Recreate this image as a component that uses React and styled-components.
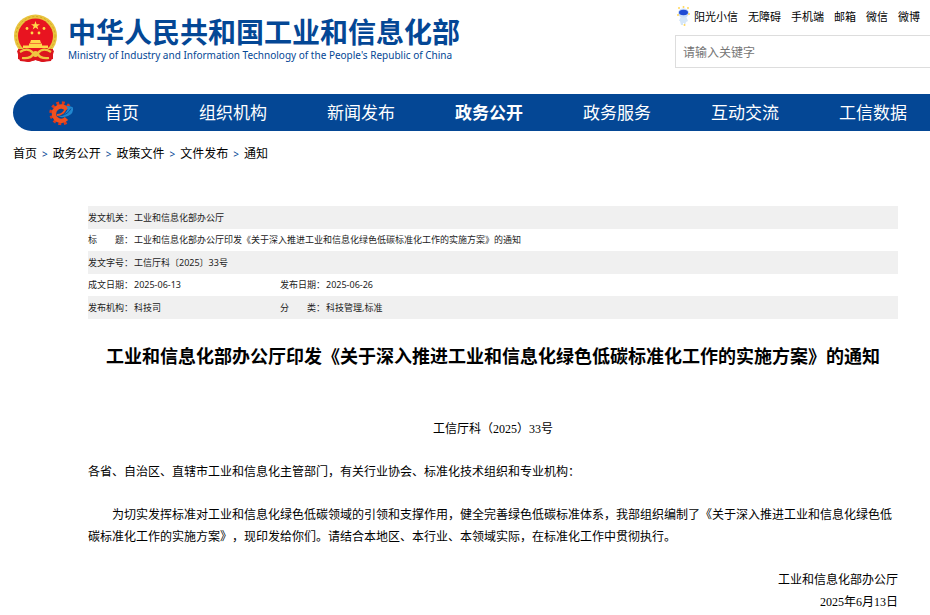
import React from 'react';
import styled, { createGlobalStyle } from 'styled-components';

const GlobalStyle = createGlobalStyle`
    * {
        box-sizing:border-box;
    }
    body {
        margin:0;
        background-color:#fff;
        color:#000;
        font-family:"Noto Sans", "Noto Sans CJK SC", sans-serif;
        font-size:12px;
        text-spacing-trim:space-all;
        overflow-x:hidden;
    }
    a {
        color:inherit;
        text-decoration:none;
    }
`;

const Page = styled.div`
    padding-left:13px;
`;

const Header = styled.header`
    display:flex;
    justify-content:space-between;
    align-items:flex-start;
    height:94px;
`;

const Brand = styled.a`
    display:flex;
    gap:10px;
    padding-top:14px;
    color:#044795;
`;

const BrandText = styled.span`
    display:flex;
    flex-direction:column;
    white-space:nowrap;
`;

const BrandName = styled.strong`
    font-family:"Noto Sans CJK SC", sans-serif;
    font-size:28px;
    line-height:34px;
`;

const BrandSub = styled.span`
    font-size:10px;
    line-height:14px;
`;

const Tools = styled.div`
    display:flex;
    flex-direction:column;
    width:255px;
    padding-top:7px;
`;

const Links = styled.nav`
    display:flex;
    align-items:center;
    gap:10px;
    height:18px;
    padding-left:2px;
    font-size:11px;
    white-space:nowrap;
`;

const ToolLink = styled.a`
    display:flex;
    align-items:center;
    gap:4px;
`;

const Search = styled.input`
    height:33px;
    margin-top:10px;
    padding:2px 7px 0;
    border:1px solid #ddd;
    border-right:none;
    border-radius:0;
    font-family:inherit;
    font-size:12px;
    outline:none;

    &::placeholder {
        color:#757575;
    }
`;

const MainNav = styled.nav`
    display:flex;
    align-items:center;
    height:37px;
    padding-left:36px;
    background-color:#044795;
    border-radius:19px 0 0 19px;
    overflow:hidden;
`;

const NavList = styled.div`
    display:flex;
    gap:60px;
    margin-left:30px;
`;

const NavLink = styled.a`
    color:#fff;
    font-size:17px;
    line-height:37px;
    font-weight:${props => (props.$active ? '700' : '400')};
    white-space:nowrap;
`;

const Crumbs = styled.nav`
    display:flex;
    gap:5px;
    margin-top:14px;
    line-height:18px;
`;

const Arrow = styled.span`
    color:#044795;
    font-size:10px;
`;

const Article = styled.main`
    margin:43px 32px 0 75px;
`;

const Meta = styled.table`
    width:100%;
    border-collapse:collapse;
    table-layout:fixed;
    color:#222;
    font-size:9px;
    line-height:12px;
`;

const MetaRow = styled.tr`
    height:22px;

    &:nth-child(odd) {
        height:23px;
        background-color:#f0f0f0;
    }
`;

const MetaLabel = styled.th`
    padding:0;
    font-weight:400;
    text-align:left;
    white-space:pre;
`;

const MetaValue = styled.td`
    padding:0;
`;

const Title = styled.h1`
    margin:23px 0 48px;
    font-size:18px;
    line-height:28px;
    text-align:center;
`;

const Text = styled.p`
    margin:0 0 21px;
    font-family:"Liberation Serif", "Noto Sans CJK SC", sans-serif;
    line-height:22px;
    text-align:${props => props.$align || 'left'};
    text-indent:${props => (props.$indent ? '2em' : '0')};
`;

const Emblem = () => (
    <svg width="45" height="49" viewBox="0 0 45 49" aria-hidden="true">
        <path d="M7 34l31 0 3 3-3 10-9 1-6.500-2-6.500 2-9-1L4 37z" fill="#d9141c" />
        <circle cx="22.500" cy="22" r="21.500" fill="#e9c43e" />
        <circle cx="22.500" cy="22" r="19.500" fill="none" stroke="#d3a727" strokeWidth="1" strokeDasharray="2 2" />
        <circle cx="22.500" cy="22" r="17.500" fill="#e81420" />
        <g fill="#ffd84a">
            <path d="M22.500 7l1.100 3.200h3.400l-2.700 2 1 3.200-2.800-1.900-2.800 1.900 1-3.200-2.700-2h3.400z" />
            <circle cx="14" cy="14.500" r="1.400" />
            <circle cx="31" cy="14.500" r="1.400" />
            <circle cx="19" cy="19" r="1.400" />
            <circle cx="26" cy="19" r="1.400" />
            <path d="M18 26h9l1 3h-11zM16 29.500h13v2h6v2.500H10v-2.500h6z" />
        </g>
        <path d="M5 35l9 0 8.500 4 8.500-4 9 0 0 10-10 3-7.500-2-7.500 2-10-3z" fill="#dc161d" />
        <path d="M7 38q8-5 13 1 2.500 2 5 0 5-6 13-1M9 44q9 1 11-4M36 44q-9 1-11-4" fill="none" stroke="#efc640" strokeWidth="2.200" />
        <circle cx="22.500" cy="40" r="3" fill="#efc640" />
    </svg>
);

const Mascot = () => (
    <svg width="13" height="20" viewBox="0 0 13 20" aria-hidden="true">
        <path d="M4 10h5l2 5-2 1-1 3H7v-2H6v2H4l-1-4-1 0z" fill="#d5e6f8" />
        <ellipse cx="6.500" cy="7" rx="5.500" ry="4.500" fill="#c9dcf8" />
        <ellipse cx="6.500" cy="6.500" rx="4.500" ry="2.800" fill="#1f4ad4" />
        <g fill="#ffd75a">
            <circle cx="2" cy="2" r="1" />
            <circle cx="6.500" cy="1" r="1" />
            <circle cx="11" cy="2" r="1" />
            <circle cx="12" cy="8" r="1" />
            <circle cx="1" cy="9" r="1" />
            <circle cx="7.500" cy="19" r="1" />
        </g>
    </svg>
);

const Gear = () => (
    <svg width="26" height="26" viewBox="0 0 26 26" aria-hidden="true">
        <path d="M19.500 7A9.500 9.500 0 1 0 19 20" fill="none" stroke="#dc3a1c" strokeWidth="5" strokeDasharray="2.600 2.400" />
        <path d="M18 9.500A7.200 7.200 0 1 0 17.500 18.500" fill="none" stroke="#f0501f" strokeWidth="4.500" />
        <path d="M8 15q5 0 7.500-4 1.500-3-1.500-3.500" fill="none" stroke="#f0501f" strokeWidth="2" />
        <path d="M9 16.500q7-.5 9.500-7 .5-2-1.500-3.500 5-.5 7 1.500 1 6-5 8.500-5 2-10 .5z" fill="#2187cf" />
        <path d="M12 15.500q7-1 10-7" fill="none" stroke="#0a4f9f" strokeWidth="1" />
    </svg>
);

const tools = ['无障碍', '手机端', '邮箱', '微信', '微博'];
const sections = ['首页', '组织机构', '新闻发布', '政务公开', '政务服务', '互动交流', '工信数据'];
const path = ['首页', '政务公开', '政策文件', '文件发布', '通知'];
const meta = [
    ['发文机关：', '工业和信息化部办公厅'],
    ['标　　题：', '工业和信息化部办公厅印发《关于深入推进工业和信息化绿色低碳标准化工作的实施方案》的通知'],
    ['发文字号：', '工信厅科〔2025〕33号'],
    ['成文日期：', '2025-06-13', '发布日期：', '2025-06-26'],
    ['发布机构：', '科技司', '分　　类：', '科技管理,标准'],
];

const App = () => (
    <>
        <GlobalStyle />
        <Page>
            <Header>
                <Brand href="#">
                    <Emblem />
                    <BrandText>
                        <BrandName>中华人民共和国工业和信息化部</BrandName>
                        <BrandSub>Ministry of Industry and Information Technology of the People's Republic of China</BrandSub>
                    </BrandText>
                </Brand>
                <Tools>
                    <Links>
                        <ToolLink href="#"><Mascot />阳光小信</ToolLink>
                        {tools.map(name => <ToolLink href="#" key={name}>{name}</ToolLink>)}
                    </Links>
                    <Search type="text" aria-label="请输入关键字" placeholder="请输入关键字" />
                </Tools>
            </Header>
            <MainNav>
                <Gear />
                <NavList>
                    {sections.map(name => (
                        <NavLink href="#" key={name} $active={name === '政务公开'}>{name}</NavLink>
                    ))}
                </NavList>
            </MainNav>
            <Crumbs>
                {path.map((name, i) => (
                    <React.Fragment key={name}>
                        {i > 0 && <Arrow>&gt;</Arrow>}
                        <a href="#">{name}</a>
                    </React.Fragment>
                ))}
            </Crumbs>
            <Article>
                <Meta>
                    <colgroup>
                        <col width="46" />
                        <col width="146" />
                        <col width="46" />
                        <col />
                    </colgroup>
                    <tbody>
                        {meta.map(([label, value, label2, value2]) => (
                            <MetaRow key={label}>
                                <MetaLabel scope="row">{label}</MetaLabel>
                                <MetaValue colSpan={label2 ? 1 : 3}>{value}</MetaValue>
                                {label2 && <MetaLabel scope="row">{label2}</MetaLabel>}
                                {label2 && <MetaValue>{value2}</MetaValue>}
                            </MetaRow>
                        ))}
                    </tbody>
                </Meta>
                <Title>工业和信息化部办公厅印发《关于深入推进工业和信息化绿色低碳标准化工作的实施方案》的通知</Title>
                <Text $align="center">工信厅科（2025）33号</Text>
                <Text>各省、自治区、直辖市工业和信息化主管部门，有关行业协会、标准化技术组织和专业机构：</Text>
                <Text $indent>为切实发挥标准对工业和信息化绿色低碳领域的引领和支撑作用，健全完善绿色低碳标准体系，我部组织编制了《关于深入推进工业和信息化绿色低碳标准化工作的实施方案》，现印发给你们。请结合本地区、本行业、本领域实际，在标准化工作中贯彻执行。</Text>
                <Text $align="right">工业和信息化部办公厅<br />2025年6月13日</Text>
            </Article>
        </Page>
    </>
);

export default App;
